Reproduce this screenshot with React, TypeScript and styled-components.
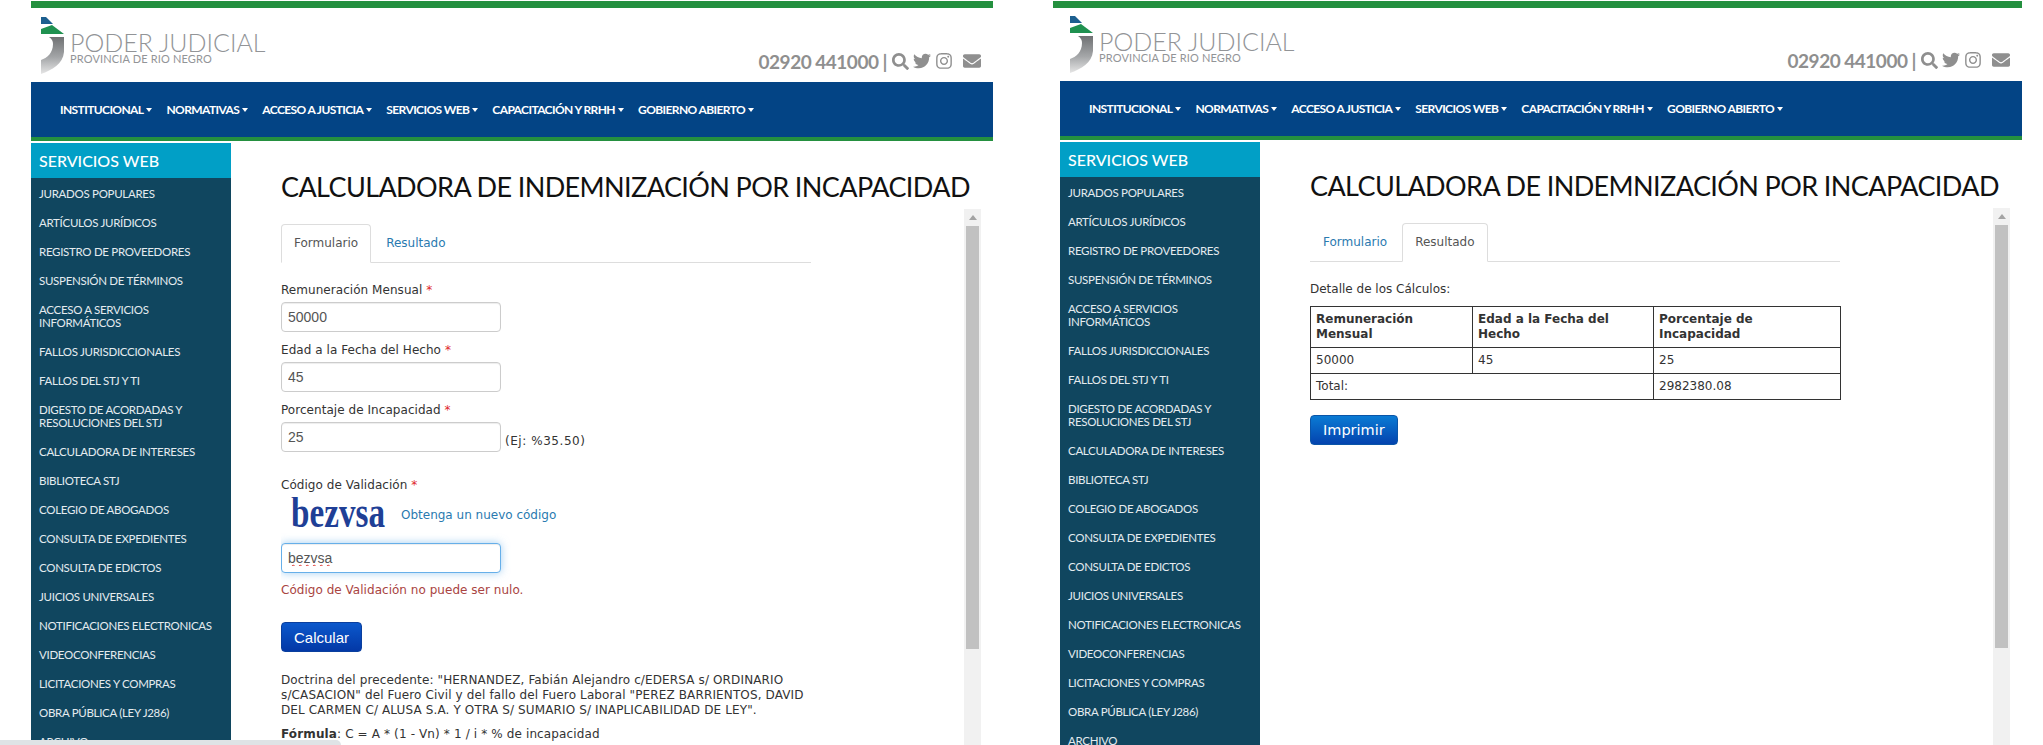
import React from "react";
import styled, { createGlobalStyle } from "styled-components";
import { FaSearch, FaTwitter, FaInstagram, FaEnvelope } from "react-icons/fa";

const GlobalStyle = createGlobalStyle`
  html, body {
    margin: 0;
    padding: 0;
    background: #fff;
    overflow: hidden;
  }
`;

const NAV_ITEMS = [
  "INSTITUCIONAL",
  "NORMATIVAS",
  "ACCESO A JUSTICIA",
  "SERVICIOS WEB",
  "CAPACITACIÓN Y RRHH",
  "GOBIERNO ABIERTO",
];

const SIDE_ITEMS = [
  "JURADOS POPULARES",
  "ARTÍCULOS JURÍDICOS",
  "REGISTRO DE PROVEEDORES",
  "SUSPENSIÓN DE TÉRMINOS",
  "ACCESO A SERVICIOS INFORMÁTICOS",
  "FALLOS JURISDICCIONALES",
  "FALLOS DEL STJ Y TI",
  "DIGESTO DE ACORDADAS Y RESOLUCIONES DEL STJ",
  "CALCULADORA DE INTERESES",
  "BIBLIOTECA STJ",
  "COLEGIO DE ABOGADOS",
  "CONSULTA DE EXPEDIENTES",
  "CONSULTA DE EDICTOS",
  "JUICIOS UNIVERSALES",
  "NOTIFICACIONES ELECTRONICAS",
  "VIDEOCONFERENCIAS",
  "LICITACIONES Y COMPRAS",
  "OBRA PÚBLICA (LEY J286)",
  "ARCHIVO",
];

const LogoMark = () => (
  <svg width="25" height="58" viewBox="0 0 25 58">
    <defs>
      <linearGradient id="jota" x1="0" y1="0" x2="0" y2="1">
        <stop offset="0" stopColor="#6f7173" />
        <stop offset="0.55" stopColor="#a4a6a8" />
        <stop offset="1" stopColor="#e6e6e6" />
      </linearGradient>
    </defs>
    <polygon points="1,1 6,1 13,8 1,8" fill="#1c5f8f" />
    <polygon points="1,13 12,9 24,18 1,18" fill="#1f9150" />
    <path d="M9 21 L24 21 L24 36 C23 48 12 54 1 58 L1 44 C7 42 13 37 13 28 C13 25 12 23 9 21 Z" fill="url(#jota)" />
  </svg>
);

const Panel = ({ shifted, children }: { shifted?: boolean; children: React.ReactNode }) => (
  <PanelFrame>
    <TopBar $shifted={shifted} />
    <Header $shifted={shifted}>
      <Logo>
        <LogoMark />
        <LogoText>
          <LogoTitle>PODER JUDICIAL</LogoTitle>
          <LogoSub>PROVINCIA DE RIO NEGRO</LogoSub>
        </LogoText>
      </Logo>
      <Contact>
        <Phone>02920 441000 |</Phone>
        <FaSearch size={17} />
        <FaTwitter size={18} />
        <FaInstagram size={18} />
        <MailIcon size={18} />
      </Contact>
    </Header>
    <Nav>
      {NAV_ITEMS.map((item) => (
        <NavItem key={item}>
          {item}
          <Caret />
        </NavItem>
      ))}
    </Nav>
    <NavStripe />
    <Body>
      <Sidebar>
        <SideTitle>SERVICIOS WEB</SideTitle>
        {SIDE_ITEMS.map((item) => (
          <SideItem key={item}>{item}</SideItem>
        ))}
      </Sidebar>
      <Main>
        <Title>CALCULADORA DE INDEMNIZACIÓN POR INCAPACIDAD</Title>
        <ScrollRow>
          <Content>{children}</Content>
          <ScrollTrack>
            <ScrollArrow />
            <ScrollThumb />
          </ScrollTrack>
        </ScrollRow>
      </Main>
    </Body>
  </PanelFrame>
);

const Tabs = ({ active }: { active: string }) => (
  <TabList>
    {["Formulario", "Resultado"].map((tab) => (
      <Tab key={tab} $active={tab === active}>
        {tab}
      </Tab>
    ))}
  </TabList>
);

const Formulario = () => (
  <>
    <Tabs active="Formulario" />
    <Form>
      <Label>
        Remuneración Mensual <Required>*</Required>
      </Label>
      <Input defaultValue="50000" readOnly />
      <Label $gap={10}>
        Edad a la Fecha del Hecho <Required>*</Required>
      </Label>
      <Input defaultValue="45" readOnly />
      <Label $gap={10}>
        Porcentaje de Incapacidad <Required>*</Required>
      </Label>
      <InputRow>
        <Input defaultValue="25" readOnly />
        <Hint>(Ej: %35.50)</Hint>
      </InputRow>
      <Label $gap={25}>
        Código de Validación <Required>*</Required>
      </Label>
      <CaptchaRow>
        <svg width="100" height="36" viewBox="0 0 100 36">
          <text
            x="2"
            y="30"
            textLength="94"
            lengthAdjust="spacingAndGlyphs"
            fontFamily="'Liberation Serif', serif"
            fontWeight="700"
            fontSize="44"
            fill="#1f3f96"
          >
            bezvsa
          </text>
        </svg>
        <Link>Obtenga un nuevo código</Link>
      </CaptchaRow>
      <Input $focused defaultValue="bezvsa" readOnly />
      <ErrorText>Código de Validación no puede ser nulo.</ErrorText>
      <Button>Calcular</Button>
      <Paragraph>
        Doctrina del precedente: "HERNANDEZ, Fabián Alejandro c/EDERSA s/ ORDINARIO
        s/CASACION" del Fuero Civil y del fallo del Fuero Laboral "PEREZ BARRIENTOS, DAVID
        DEL CARMEN C/ ALUSA S.A. Y OTRA S/ SUMARIO S/ INAPLICABILIDAD DE LEY".
      </Paragraph>
      <Paragraph $gap={9}>
        <strong>Fórmula</strong>: C = A * (1 - Vn) * 1 / i * % de incapacidad
      </Paragraph>
    </Form>
  </>
);

const Resultado = () => (
  <>
    <Tabs active="Resultado" />
    <Form>
      <DetailText>Detalle de los Cálculos:</DetailText>
      <ResultTable>
        <colgroup>
          <col width="162" />
          <col width="181" />
          <col width="187" />
        </colgroup>
        <thead>
          <tr>
            <th>Remuneración Mensual</th>
            <th>Edad a la Fecha del Hecho</th>
            <th>Porcentaje de Incapacidad</th>
          </tr>
        </thead>
        <tbody>
          <tr>
            <td>50000</td>
            <td>45</td>
            <td>25</td>
          </tr>
          <tr>
            <td colSpan={2}>Total:</td>
            <td>2982380.08</td>
          </tr>
        </tbody>
      </ResultTable>
      <Button $print>Imprimir</Button>
    </Form>
  </>
);

export default function App() {
  return (
    <Page>
      <GlobalStyle />
      <Panel>
        <Formulario />
      </Panel>
      <Panel shifted>
        <Resultado />
      </Panel>
      <PageScrollbar />
    </Page>
  );
}

const Page = styled.div`
  display: flex;
  gap: 67px;
  padding-left: 31px;
  width: 2043px;
  height: 745px;
  box-sizing: border-box;
  overflow: hidden;
  background: #fff;
  font-family: "DejaVu Sans", Verdana, sans-serif;
  font-size: 12px;
  color: #333;
`;

const PanelFrame = styled.div`
  display: flex;
  flex-direction: column;
  flex: none;
  width: 962px;
  height: 745px;
  overflow: visible;
`;

const TopBar = styled.div<{ $shifted?: boolean }>`
  flex: none;
  height: 7px;
  margin-top: 1px;
  margin-left: ${(p) => (p.$shifted ? "-7px" : "0")};
  background: #24903f;
`;

const Header = styled.header<{ $shifted?: boolean }>`
  flex: none;
  display: flex;
  justify-content: space-between;
  height: ${(p) => (p.$shifted ? "73px" : "74px")};
  padding: ${(p) => (p.$shifted ? "7px" : "8px")} 12px 0 9px;
  box-sizing: border-box;
`;

const Logo = styled.div`
  display: flex;
  align-items: flex-start;
  gap: 5px;
`;

const LogoText = styled.div`
  display: flex;
  flex-direction: column;
  padding-top: 14px;
  color: #929497;
  font-family: Lato, sans-serif;
`;

const LogoTitle = styled.div`
  font-size: 25px;
  font-weight: 300;
  line-height: 24px;
`;

const LogoSub = styled.div`
  font-size: 11px;
  line-height: 10px;
  letter-spacing: 0.15px;
`;

const Contact = styled.div`
  display: flex;
  align-items: center;
  gap: 4px;
  height: 24px;
  margin-top: 33px;
  color: #8f8f8f;
`;

const Phone = styled.span`
  font-family: Lato, sans-serif;
  font-size: 19px;
  font-weight: 700;
  letter-spacing: -0.5px;
  margin-right: 1px;
`;

const MailIcon = styled(FaEnvelope)`
  margin-left: 6px;
`;

const Nav = styled.nav`
  flex: none;
  display: flex;
  align-items: center;
  gap: 14px;
  height: 55px;
  padding-left: 29px;
  background: #034485;
`;

const NavItem = styled.span`
  display: flex;
  align-items: center;
  gap: 3px;
  font-family: Lato, sans-serif;
  font-size: 12px;
  font-weight: 700;
  letter-spacing: -0.6px;
  color: #fff;
`;

const Caret = styled.i`
  width: 0;
  height: 0;
  border-left: 3.5px solid transparent;
  border-right: 3.5px solid transparent;
  border-top: 4px solid #fff;
`;

const NavStripe = styled.div`
  flex: none;
  height: 4px;
  background: #24903f;
`;

const Body = styled.div`
  flex: 1;
  min-height: 0;
  display: flex;
  margin-top: 2px;
`;

const Sidebar = styled.aside`
  flex: none;
  width: 200px;
  overflow: hidden;
  background: #10465f;
  font-family: Lato, sans-serif;
`;

const SideTitle = styled.div`
  height: 35px;
  line-height: 36px;
  padding-left: 8px;
  background: #019fc6;
  color: #fff;
  font-size: 16px;
  font-weight: 500;
`;

const SideItem = styled.div`
  padding: 8.5px 8px 7.5px;
  color: #e4ebef;
  font-size: 11.5px;
  line-height: 13px;
  letter-spacing: -0.3px;
`;

const Main = styled.main`
  flex: 1;
  min-width: 0;
  display: flex;
  flex-direction: column;
  padding-left: 50px;
`;

const Title = styled.h1`
  flex: none;
  margin: 27px 0 5px;
  font-family: Lato, sans-serif;
  font-size: 27px;
  font-weight: 400;
  line-height: 34px;
  letter-spacing: -0.6px;
  color: #111;
  white-space: nowrap;
`;

const ScrollRow = styled.div`
  flex: 1;
  min-height: 0;
  display: flex;
`;

const Content = styled.div`
  flex: none;
  width: 683px;
  padding-top: 15px;
  box-sizing: border-box;
  overflow: hidden;
`;

const ScrollTrack = styled.div`
  flex: none;
  width: 17px;
  background: #f1f1f1;
`;

const ScrollArrow = styled.div`
  width: 0;
  height: 0;
  margin: 6px auto 6px;
  border-left: 4px solid transparent;
  border-right: 4px solid transparent;
  border-bottom: 5px solid #a3a3a3;
`;

const ScrollThumb = styled.div`
  width: 13px;
  height: 423px;
  margin: 0 auto;
  background: #c1c1c1;
`;

const TabList = styled.div`
  display: flex;
  width: 530px;
  height: 39px;
  box-sizing: border-box;
  border-bottom: 1px solid #ddd;
`;

const Tab = styled.div<{ $active?: boolean }>`
  height: 39px;
  box-sizing: border-box;
  margin-right: 2px;
  padding: 0 12px;
  line-height: 37px;
  border: 1px solid ${(p) => (p.$active ? "#ddd" : "transparent")};
  border-bottom-color: ${(p) => (p.$active ? "#fff" : "transparent")};
  border-radius: 4px 4px 0 0;
  background: ${(p) => (p.$active ? "#fff" : "transparent")};
  color: ${(p) => (p.$active ? "#555" : "#2a7ab0")};
`;

const Form = styled.div`
  width: 530px;
  padding-top: 19px;
`;

const Label = styled.div<{ $gap?: number }>`
  margin-top: ${(p) => p.$gap ?? 0}px;
  margin-bottom: 4px;
  padding-top: 1px;
  line-height: 15px;
  letter-spacing: 0.05px;
`;

const Required = styled.span`
  color: #e0262b;
`;

const Input = styled.input<{ $focused?: boolean }>`
  display: block;
  width: 220px;
  height: 30px;
  box-sizing: border-box;
  padding: 6px;
  border: 1px solid ${(p) => (p.$focused ? "#66afe9" : "#ccc")};
  border-radius: 4px;
  outline: none;
  font-family: "Liberation Sans", Arial, sans-serif;
  font-size: 14px;
  color: #555;
  box-shadow: ${(p) =>
    p.$focused
      ? "inset 0 1px 1px rgba(0,0,0,.075), 0 0 8px rgba(102,175,233,.6)"
      : "inset 0 1px 1px rgba(0,0,0,.075)"};
  text-decoration: ${(p) => (p.$focused ? "underline wavy #e0352f 1px" : "none")};
`;

const InputRow = styled.div`
  display: flex;
  align-items: flex-end;
  gap: 4px;
`;

const Hint = styled.span`
  line-height: 15px;
  margin-bottom: 3px;
  letter-spacing: 0.55px;
`;

const CaptchaRow = styled.div`
  display: flex;
  align-items: center;
  gap: 12px;
  height: 36px;
  margin-bottom: 10px;
  padding-left: 8px;
`;

const Link = styled.span`
  color: #2a7ab0;
`;

const ErrorText = styled.div`
  margin-top: 10px;
  margin-bottom: 24px;
  line-height: 15px;
  color: #a94442;
  letter-spacing: 0.03px;
`;

const Button = styled.button<{ $print?: boolean }>`
  display: block;
  height: 30px;
  padding: 0 12px;
  border: 1px solid ${(p) => (p.$print ? "#0a55a8" : "#0a3f9e")};
  border-radius: 4px;
  background: linear-gradient(
    ${(p) => (p.$print ? "#0a7bd4, #0443ae" : "#0b58cc, #0338a6")}
  );
  color: #fff;
  font-family: ${(p) => (p.$print ? '"DejaVu Sans", sans-serif' : '"Liberation Sans", sans-serif')};
  font-size: ${(p) => (p.$print ? "14.5px" : "15px")};
`;

const Paragraph = styled.p<{ $gap?: number }>`
  margin: ${(p) => p.$gap ?? 21}px 0 0;
  line-height: 15px;
  letter-spacing: 0.13px;
`;

const DetailText = styled.div`
  line-height: 15px;
  margin-top: 1px;
  margin-bottom: 9px;
`;

const ResultTable = styled.table`
  width: 530px;
  margin-bottom: 15px;
  border-collapse: collapse;
  table-layout: fixed;

  th,
  td {
    padding: 5px;
    border: 1px solid #333;
    line-height: 15px;
    text-align: left;
  }
`;

const PageScrollbar = styled.div`
  position: fixed;
  left: 0;
  bottom: 0;
  width: 341px;
  height: 5px;
  border-top-right-radius: 5px;
  background: #dfe3e6;
`;
